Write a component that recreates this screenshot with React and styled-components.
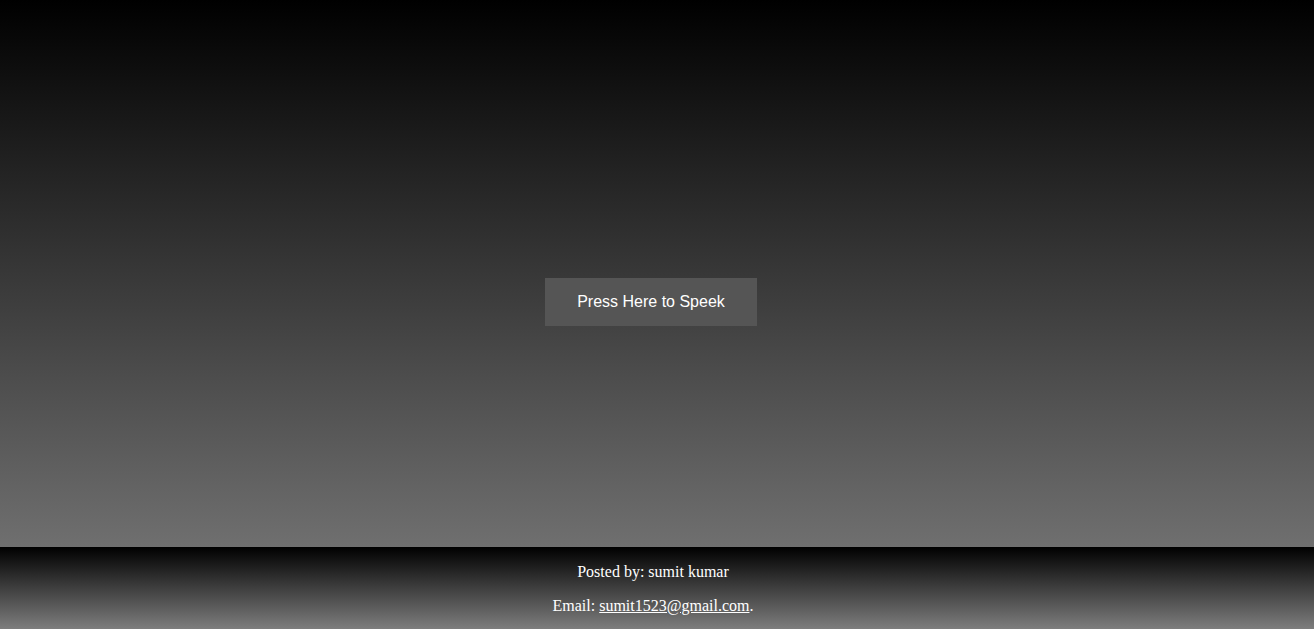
import styled, { createGlobalStyle } from "styled-components";

const GlobalStyle = createGlobalStyle`
  html, body {
    margin: 0;
    padding: 0;
  }
  body {
    font-family: "Liberation Serif", "Times New Roman", serif;
  }
`;

function App() {
  return (
    <>
      <GlobalStyle />
      <Page>
        <Main>
          <SpeakButton type="button">Press Here to Speek</SpeakButton>
        </Main>
        <Footer>
          <FooterLine>Posted by: sumit kumar</FooterLine>
          <FooterLine>
            Email: <MailLink href="#">sumit1523@gmail.com</MailLink>.
          </FooterLine>
        </Footer>
      </Page>
    </>
  );
}

const Page = styled.div`
  height: 100vh;
  overflow: hidden;
  display: flex;
  flex-direction: column;
  background: linear-gradient(#000000, #808080);
`;

const Main = styled.main`
  flex: 0 0 547px;
  box-sizing: border-box;
  display: flex;
  align-items: center;
  justify-content: center;
  padding: 56px 8px 0 0;
`;

const SpeakButton = styled.button`
  width: 212px;
  height: 48px;
  border: none;
  background-color: #555555;
  color: #ffffff;
  font-family: "Liberation Sans", Arial, sans-serif;
  font-size: 16px;
  cursor: pointer;
  margin-right: 4px;
`;

const Footer = styled.footer`
  flex: 0 0 auto;
  box-sizing: border-box;
  padding-right: 8px;
  text-align: center;
  color: #ffffff;
  background: linear-gradient(#000000, #808080);
  display: flow-root;
`;

const FooterLine = styled.p`
  margin: 16px 0;
  font-size: 16px;
`;

const MailLink = styled.a`
  color: #ffffff;
  text-decoration: underline;
`;

export default App;
